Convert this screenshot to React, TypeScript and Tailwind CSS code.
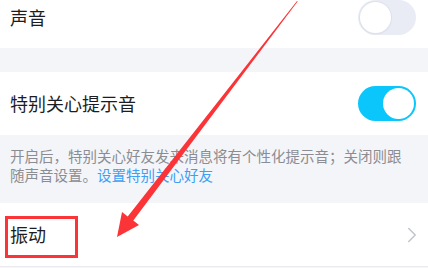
import React from 'react';
import { ChevronRight } from 'lucide-react';

function Toggle({ on }: { on: boolean }) {
  return (
    <div
      className={`w-[58px] h-[35px] rounded-full flex items-center px-[2px] ${
        on ? 'bg-[#0ac6fb] justify-end' : 'bg-[#e9ecf4] justify-start'
      }`}
    >
      <div className={`w-[31px] h-[31px] rounded-full bg-white ${on ? '' : 'shadow-[0_0_0_1px_#dde1ec,0_1px_2px_rgba(0,0,0,0.08)]'}`} />
    </div>
  );
}

export default function App() {
  return (
    <div
      className="relative w-[428px] h-[268px] overflow-hidden bg-[#f4f5f9]"
      style={{ fontFamily: '"Noto Sans CJK SC", "Noto Sans", sans-serif' }}
    >
      {/* 声音 */}
      <div className="h-[48px] bg-white flex items-center justify-between pl-[10px] pr-[12px] pb-[13px]">
        <span className="text-[18px] text-[#1c1d22]">声音</span>
        <Toggle on={false} />
      </div>

      <div className="h-[24px]" />

      {/* 特别关心提示音 */}
      <div className="h-[63px] bg-white flex items-center justify-between pl-[10px] pr-[12px]">
        <span className="text-[18px] text-[#1c1d22]">特别关心提示音</span>
        <Toggle on />
      </div>

      <div className="h-[68px] pl-[10px] pr-[16px] pt-[11px] text-[14.5px] leading-[19px] text-[#8b8d93]">
        开启后，特别关心好友发来消息将有个性化提示音；关闭则跟随声音设置。
        <span className="text-[#3d9ff5]">设置特别关心好友</span>
      </div>

      {/* 振动 */}
      <div className="h-[64px] bg-white flex items-center justify-between pl-[10px] pr-[3px] border-b border-[#ececf0]">
        <span className="text-[18px] text-[#1c1d22]">振动</span>
        <ChevronRight size={26} strokeWidth={1.4} className="text-[#c3c6cd]" />
      </div>

      {/* annotation overlay */}
      <div className="absolute left-[5px] top-[216px] w-[73px] h-[42px] border-[3px] border-[#fb3437]" />
      <svg className="absolute inset-0 pointer-events-none" width="428" height="268" viewBox="0 0 428 268">
        <polygon points="297,1 297.6,1.4 133.3,220.6 139,225 117,237 122,212 127.7,216.4" fill="#fb3437" />
      </svg>
    </div>
  );
}
